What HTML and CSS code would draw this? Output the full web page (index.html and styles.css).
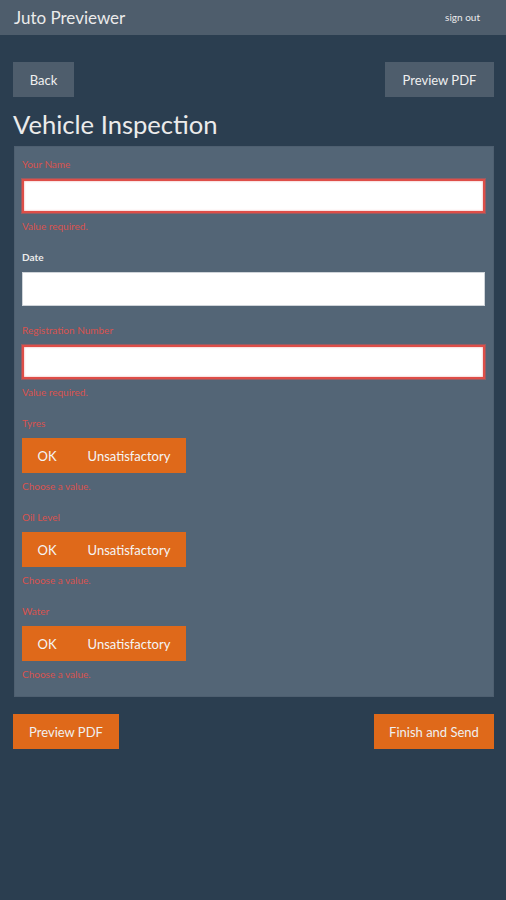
FILE: index.html
```html
<!DOCTYPE html>
<html>
<head>
<meta charset="utf-8">
<title>Juto Previewer</title>
<link rel="stylesheet" href="styles.css">
</head>
<body>
<header class="topbar">
  <span class="brand">Juto Previewer</span>
  <a class="signout">sign out</a>
</header>
<main class="page">
  <div class="toolbar">
    <button class="btn btn-dark btn-back">Back</button>
    <button class="btn btn-dark btn-preview">Preview PDF</button>
  </div>
  <h1 class="title">Vehicle Inspection</h1>
  <form class="panel">
    <div class="group error">
      <label class="label">Your Name</label>
      <input class="input" type="text">
      <div class="help">Value required.</div>
    </div>
    <div class="group">
      <label class="label">Date</label>
      <input class="input" type="text">
    </div>
    <div class="group error">
      <label class="label">Registration Number</label>
      <input class="input" type="text">
      <div class="help">Value required.</div>
    </div>
    <div class="group error">
      <label class="label">Tyres</label>
      <div class="btn-group">
        <button type="button" class="opt opt-ok">OK</button>
        <button type="button" class="opt opt-bad">Unsatisfactory</button>
      </div>
      <div class="help">Choose a value.</div>
    </div>
    <div class="group error">
      <label class="label">Oil Level</label>
      <div class="btn-group">
        <button type="button" class="opt opt-ok">OK</button>
        <button type="button" class="opt opt-bad">Unsatisfactory</button>
      </div>
      <div class="help">Choose a value.</div>
    </div>
    <div class="group error">
      <label class="label">Water</label>
      <div class="btn-group">
        <button type="button" class="opt opt-ok">OK</button>
        <button type="button" class="opt opt-bad">Unsatisfactory</button>
      </div>
      <div class="help">Choose a value.</div>
    </div>
  </form>
  <div class="footer-actions">
    <button class="btn btn-orange btn-preview2">Preview PDF</button>
    <button class="btn btn-orange btn-finish">Finish and Send</button>
  </div>
</main>
</body>
</html>
```
FILE: styles.css
```css
* { box-sizing: border-box; }
html, body {
  margin: 0;
  padding: 0;
  background: #2b3e50;
  font-family: Lato, "Open Sans", sans-serif;
  color: #ebebeb;
}
.topbar {
  height: 35px;
  background: #4e5d6c;
  display: flex;
  align-items: center;
  justify-content: space-between;
  padding: 0 26px 1px 14px;
}
.brand {
  font-size: 17px;
  color: #ebebeb;
}
.signout {
  font-size: 10px;
  color: #ebebeb;
}
.page {
  padding: 27px 12px 0 13px;
}
.toolbar {
  display: flex;
  justify-content: space-between;
}
.btn {
  border: 0;
  font-family: Lato, "Open Sans", sans-serif;
  font-size: 13px;
  color: #f0f0f0;
  height: 35px;
  padding: 0;
}
.btn-dark { background: #4e5d6c; }
.btn-back { width: 61px; }
.btn-preview { width: 109px; }
.title {
  font-size: 25.6px;
  font-weight: 400;
  line-height: 1.1;
  margin: 13px 0 8px 0;
  color: #ebebeb;
}
.panel {
  background: #536576;
  margin-left: 1px;
  padding: 11px 9px 16px 8px;
  box-shadow: inset 0 0 0 1px #4e5f70;
}
.group {
  display: flex;
  flex-direction: column;
  align-items: stretch;
  margin-bottom: 17px;
}
.group:last-child { margin-bottom: 0; }
.label {
  font-size: 10px;
  font-weight: 700;
  line-height: 14px;
  margin-bottom: 8px;
  color: #ebebeb;
}
.group.error .label {
  color: #d9534f;
  font-weight: 400;
}
.input {
  height: 34px;
  border: 1px solid #cfd4d9;
  background: #fff;
  margin: 0;
  padding: 0 8px;
  font-size: 13px;
}
.group.error .input {
  border: 2px solid #de4e48;
  box-shadow: 0 0 0 1px rgba(217, 83, 79, 0.5), inset 0 0 2px rgba(217, 83, 79, 0.6);
}
.help {
  font-size: 10px;
  line-height: 14px;
  margin-top: 6px;
  color: #d9534f;
}
.btn-group {
  display: flex;
  align-self: flex-start;
  background: #df691a;
  height: 35px;
}
.opt {
  border: 0;
  background: #df691a;
  color: #f5f5f5;
  font-family: Lato, "Open Sans", sans-serif;
  font-size: 13px;
  height: 35px;
  padding: 0;
}
.opt-ok { width: 50px; }
.opt-bad { width: 114px; }
.footer-actions {
  display: flex;
  justify-content: space-between;
  margin-top: 17px;
}
.btn-orange { background: #df691a; }
.btn-preview2 { width: 106px; }
.btn-finish { width: 120px; }
```
